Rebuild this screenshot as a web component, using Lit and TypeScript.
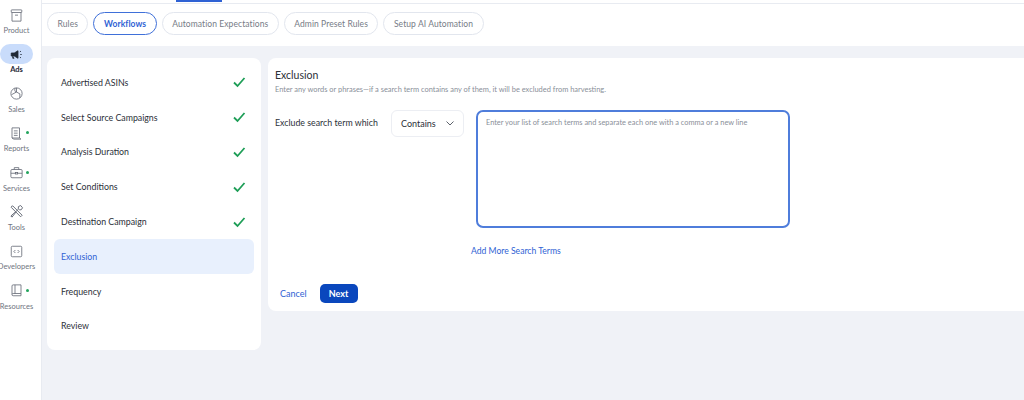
import { LitElement, html, css, svg } from 'lit';
import { customElement } from 'lit/decorators.js';

const icons: Record<string, unknown> = {
  product: svg`<rect x="3" y="2.5" width="14" height="3.5" rx=".5"/><path d="M4 6v11.500h12V6M8 9.500h4"/>`,
  ads: svg`<path d="M3 8h4l5-3v10l-5-3H3zM5 12v3h2" fill="#1f2937" stroke="#1f2937"/><path d="M14.500 6.500l1.500-1M15 10h2M14.500 13.500l1.500 1" stroke="#1f2937"/>`,
  sales: svg`<circle cx="10" cy="10" r="7.500"/><path d="M10 2.500v5.500l-6.500 3.500M10 8l4.500 2.500v5.500M8 2.800c-.8 3 0 5.500 2 5.200"/>`,
  reports: svg`<path d="M4 2.500h10v13.500H4zM14 16l2 1.500H6.500L4 16M6.500 6.500h5M6.500 9.500h5M6.500 12.500h5"/>`,
  services: svg`<rect x="2.500" y="6" width="15" height="11" rx="1.500"/><path d="M7 6V3.500h6V6M2.500 11h6M11.500 11h6"/><rect x="8.500" y="10" width="3" height="2"/>`,
  tools: svg`<path d="M3.500 3l1.500-.5 12.500 12.500-2 2L3 4.500zM12.500 3.500l3-1.500 2.500 3-1.500 2.500-2.500.5-1.500-1.500zM12 7.500L2.500 16l1.500 1.500 5.500-7" stroke-width="1.300"/>`,
  developers: svg`<rect x="3" y="3" width="14" height="14" rx="1.500"/><path d="M8.500 8l-2 2 2 2M11.500 8l2 2-2 2"/>`,
  resources: svg`<path d="M4 15V4a1.500 1.500 0 0 1 1.500-1.500H16V14H5.500A1.500 1.500 0 0 0 4 15.500 1.500 1.500 0 0 0 5.500 17H16v-3M8 2.500V14"/>`,
};

@customElement('app-root')
export class AppRoot extends LitElement {
  static styles = css`
    :host {
      display: block;
      width: 1024px;
      height: 400px;
      overflow: hidden;
      background: #f0f2f7;
      font-family: 'Lato', 'Noto Sans', sans-serif;
      color: #2b2f38;
    }
    .page { display: flex; height: 400px; }
    .side {
      width: 41px;
      flex: none;
      background: #fff;
      border-right: 1px solid #e8ebf1;
      display: flex;
      flex-direction: column;
      align-items: flex-start;
      padding-top: 5px;
      box-sizing: content-box;
    }
    .nav {
      width: 33px;
      height: 39.400px;
      display: flex;
      flex-direction: column;
      align-items: center;
      position: relative;
      font-size: 7.500px;
      line-height: 10px;
      color: #6f7480;
      white-space: nowrap;
    }
    .nav .ic {
      width: 33px;
      height: 20px;
      flex: none;
      border-radius: 10px;
      display: flex;
      align-items: center;
      justify-content: center;
      margin-bottom: 1px;
    }
    .nav svg { width: 15px; height: 15px; fill: none; stroke: #666b77; stroke-width: 1.100; }
    .nav.on { font-weight: 700; color: #1f2937; }
    .nav.on .ic { background: #c9dcfb; }
    .nav .dot {
      position: absolute;
      top: 8px;
      right: 4px;
      width: 3px;
      height: 3px;
      border-radius: 50%;
      background: #22a45d;
    }
    .main { flex: 1; min-width: 0; display: flex; flex-direction: column; }
    .strip { height: 3px; background: #fff; border-bottom: 1px solid #e8ebf1; position: relative; }
    .strip i { position: absolute; left: 134px; top: 0; width: 46px; height: 2px; background: #2f62d4; }
    .tabs {
      height: 42px;
      background: #fff;
      display: flex;
      align-items: center;
      gap: 5px;
      padding: 0 0 3px 5px;
      box-sizing: border-box;
    }
    .tab {
      height: 23px;
      padding: 0 9.500px;
      display: flex;
      align-items: center;
      border: 1px solid #e2e6ee;
      border-radius: 12px;
      font-size: 8.500px;
      color: #767b86;
      letter-spacing: .08px;
      box-sizing: border-box;
      white-space: nowrap;
    }
    .tab.on { border-color: #3f70d9; color: #2f62d4; font-weight: 700; }
    .body { display: flex; align-items: flex-start; gap: 7px; padding: 12px 0 0 5px; }
    .steps {
      width: 214px;
      height: 292px;
      flex: none;
      background: #fff;
      border-radius: 8px;
      padding: 7px;
      box-sizing: border-box;
    }
    .step {
      height: 34.800px;
      display: flex;
      align-items: center;
      justify-content: space-between;
      padding: 0 8px 0 7px;
      font-size: 8.800px;
      border-radius: 6px;
    }
    .step.on { background: #e8f0fd; color: #2f62d4; }
    .step svg { width: 14px; height: 12px; fill: none; stroke: #1e9e57; stroke-width: 1.800; }
    .panel {
      flex: 1;
      height: 253px;
      background: #fff;
      border-radius: 8px 0 0 8px;
      padding: 11px 7px 0;
      box-sizing: border-box;
      position: relative;
    }
    h2 { margin: 0; font-size: 10.500px; line-height: 13px; font-weight: 400; }
    .desc { margin: 3px 0 0; font-size: 7.450px; line-height: 10px; color: #8a8f99; }
    .row { display: flex; align-items: flex-start; margin-top: 15px; }
    .row label { width: 116px; flex: none; font-size: 8.800px; line-height: 25px; }
    .select {
      width: 73px;
      height: 27px;
      border: 1px solid #eceef3;
      border-radius: 6px;
      margin-right: 12px;
      display: flex;
      align-items: center;
      justify-content: space-between;
      padding: 0 9px 1px;
      box-sizing: border-box;
      font-size: 9px;
    }
    .select svg { width: 8px; height: 5px; fill: none; stroke: #5d626c; stroke-width: 1; }
    .area {
      width: 314px;
      height: 118px;
      border: 2px solid #4f7ddb;
      border-radius: 7px;
      padding: 5px 8px;
      box-sizing: border-box;
      font-size: 7.400px;
      line-height: 12px;
      color: #8a8f99;
    }
    .more {
      margin: 17px 0 0 196px;
      font-size: 8.600px;
      line-height: 12px;
      color: #2f62d4;
    }
    .actions { display: flex; align-items: center; gap: 13px; margin: 27px 0 0 5px; }
    .cancel { font-size: 9px; color: #2f62d4; }
    .next {
      width: 38px;
      height: 19px;
      border-radius: 5px;
      background: #0a47bd;
      color: #fff;
      font-size: 9px;
      font-weight: 700;
      display: flex;
      align-items: center;
      justify-content: center;
    }
  `;

  private nav = [
    { id: 'product', label: 'Product' },
    { id: 'ads', label: 'Ads', on: true },
    { id: 'sales', label: 'Sales' },
    { id: 'reports', label: 'Reports', dot: true },
    { id: 'services', label: 'Services', dot: true },
    { id: 'tools', label: 'Tools' },
    { id: 'developers', label: 'Developers' },
    { id: 'resources', label: 'Resources', dot: true },
  ];

  private tabs = ['Rules', 'Workflows', 'Automation Expectations', 'Admin Preset Rules', 'Setup AI Automation'];

  private steps = [
    { label: 'Advertised ASINs', done: true },
    { label: 'Select Source Campaigns', done: true },
    { label: 'Analysis Duration', done: true },
    { label: 'Set Conditions', done: true },
    { label: 'Destination Campaign', done: true },
    { label: 'Exclusion', on: true },
    { label: 'Frequency' },
    { label: 'Review' },
  ];

  render() {
    return html`<div class="page">
      <div class="side">
        ${this.nav.map(n => html`<div class="nav ${n.on ? 'on' : ''}">
          <div class="ic"><svg viewBox="0 0 20 20">${icons[n.id]}</svg></div>
          ${n.label}
          ${n.dot ? html`<span class="dot"></span>` : ''}
        </div>`)}
      </div>
      <div class="main">
        <div class="strip"><i></i></div>
        <div class="tabs">
          ${this.tabs.map((t, i) => html`<div class="tab ${i == 1 ? 'on' : ''}">${t}</div>`)}
        </div>
        <div class="body">
          <div class="steps">
            ${this.steps.map(s => html`<div class="step ${s.on ? 'on' : ''}">
              <span>${s.label}</span>
              ${s.done ? html`<svg viewBox="0 0 14 12"><path d="M2 6.500l3.500 3.500L12.500 2"/></svg>` : ''}
            </div>`)}
          </div>
          <div class="panel">
            <h2>Exclusion</h2>
            <p class="desc">Enter any words or phrases—if a search term contains any of them, it will be excluded from harvesting.</p>
            <div class="row">
              <label>Exclude search term which</label>
              <div class="select">Contains <svg viewBox="0 0 8 5"><path d="M.5.5L4 4 7.500.5"/></svg></div>
              <div class="area">Enter your list of search terms and separate each one with a comma or a new line</div>
            </div>
            <div class="more">Add More Search Terms</div>
            <div class="actions">
              <span class="cancel">Cancel</span>
              <div class="next">Next</div>
            </div>
          </div>
        </div>
      </div>
    </div>`;
  }
}
